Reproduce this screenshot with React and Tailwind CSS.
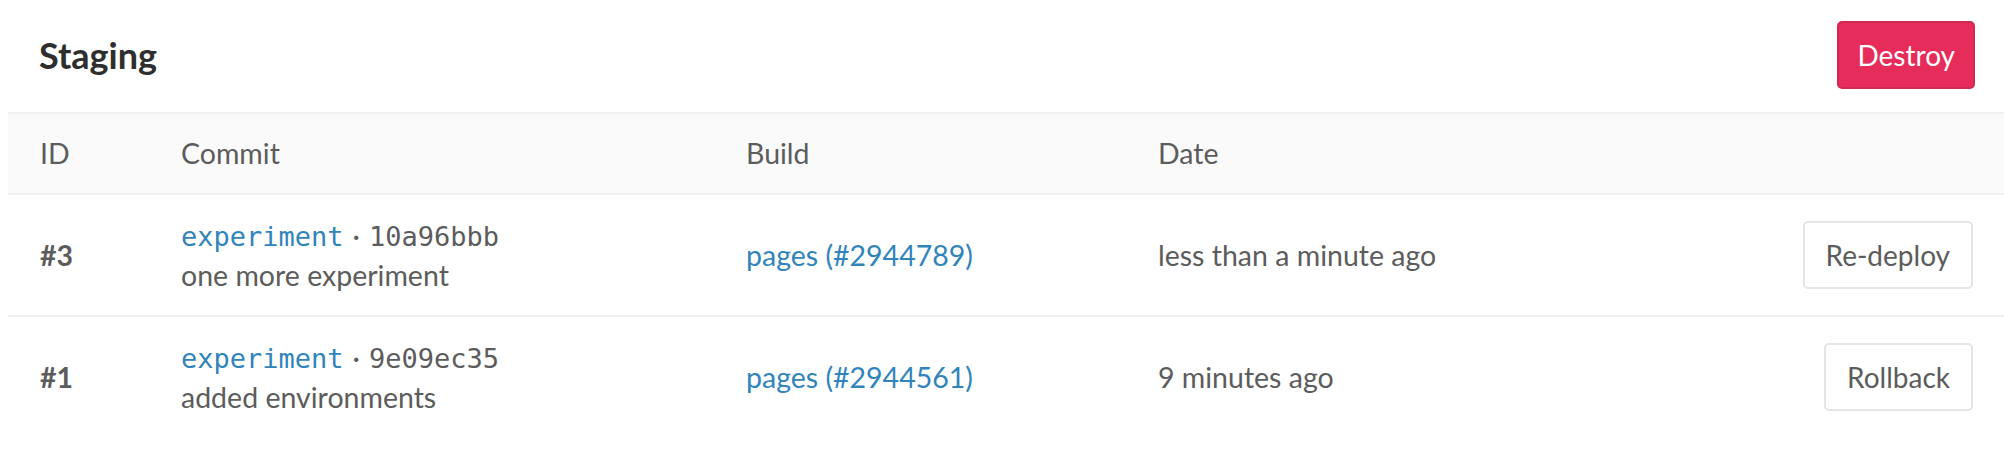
import React from "react";

const deployments = [
  {
    id: 3,
    branch: "experiment",
    sha: "10a96bbb",
    message: "one more experiment",
    build: "pages (#2944789)",
    date: "less than a minute ago",
    action: "Re-deploy",
  },
  {
    id: 1,
    branch: "experiment",
    sha: "9e09ec35",
    message: "added environments",
    build: "pages (#2944561)",
    date: "9 minutes ago",
    action: "Rollback",
  },
];

// column widths: id | commit | build | date | actions
const cols = "grid grid-cols-[141px_565px_412px_1fr_auto]";

export default function App() {
  return (
    <div
      className="w-[2004px] h-[454px] bg-white pl-2 text-[28.5px] text-[#5c5c5c] overflow-hidden"
      style={{ fontFamily: "'Source Sans Pro', Lato, 'Liberation Sans', sans-serif" }}
    >
      {/* Title bar */}
      <div className="flex items-center justify-between h-[112px] pl-8 pr-[29px]">
        <h3 className="text-[36px] font-bold text-[#2e2e2e] leading-none -mt-[2px] -ml-[1px]">Staging</h3>
        <button className="h-[68px] px-[18px] -mt-[3px] rounded-[5px] bg-[#e52c5a] border-2 border-[#d22852] text-white text-[28px] leading-none">
          Destroy
        </button>
      </div>

      {/* Header */}
      <div className={`${cols} h-[83px] items-center bg-[#fafafa] border-y-2 border-[#f0f0f0]`}>
        <div className="pl-8">ID</div>
        <div className="pl-8">Commit</div>
        <div className="pl-8">Build</div>
        <div className="pl-8">Date</div>
        <div className="pr-[31px]"></div>
      </div>

      {/* Rows */}
      {deployments.map((d, i) => (
        <div
          key={d.id}
          className={`${cols} items-center ${i === 0 ? "h-[122px] border-b-2 border-[#f0f0f0]" : "h-[120px]"}`}
        >
          <div className="pl-8 font-bold">#{d.id}</div>
          <div className="pl-8 leading-[39px]">
            <div className="whitespace-nowrap">
              <a
                className="text-[#3084bb] text-[27px]"
                style={{ fontFamily: "'DejaVu Sans Mono', monospace" }}
              >
                {d.branch}
              </a>
              <span className="mx-[9px]">·</span>
              <a
                className="text-[#5c5c5c] text-[27px]"
                style={{ fontFamily: "'DejaVu Sans Mono', monospace" }}
              >
                {d.sha}
              </a>
            </div>
            <div>{d.message}</div>
          </div>
          <div className="pl-8">
            <a className="text-[#3084bb]">{d.build}</a>
          </div>
          <div className="pl-8">{d.date}</div>
          <div className="pr-[31px] flex justify-end">
            <button className="h-[68px] px-[21px] rounded-[5px] bg-white border-2 border-[#e5e5e5] text-[#5c5c5c] text-[28px] leading-none">
              {d.action}
            </button>
          </div>
        </div>
      ))}
    </div>
  );
}
